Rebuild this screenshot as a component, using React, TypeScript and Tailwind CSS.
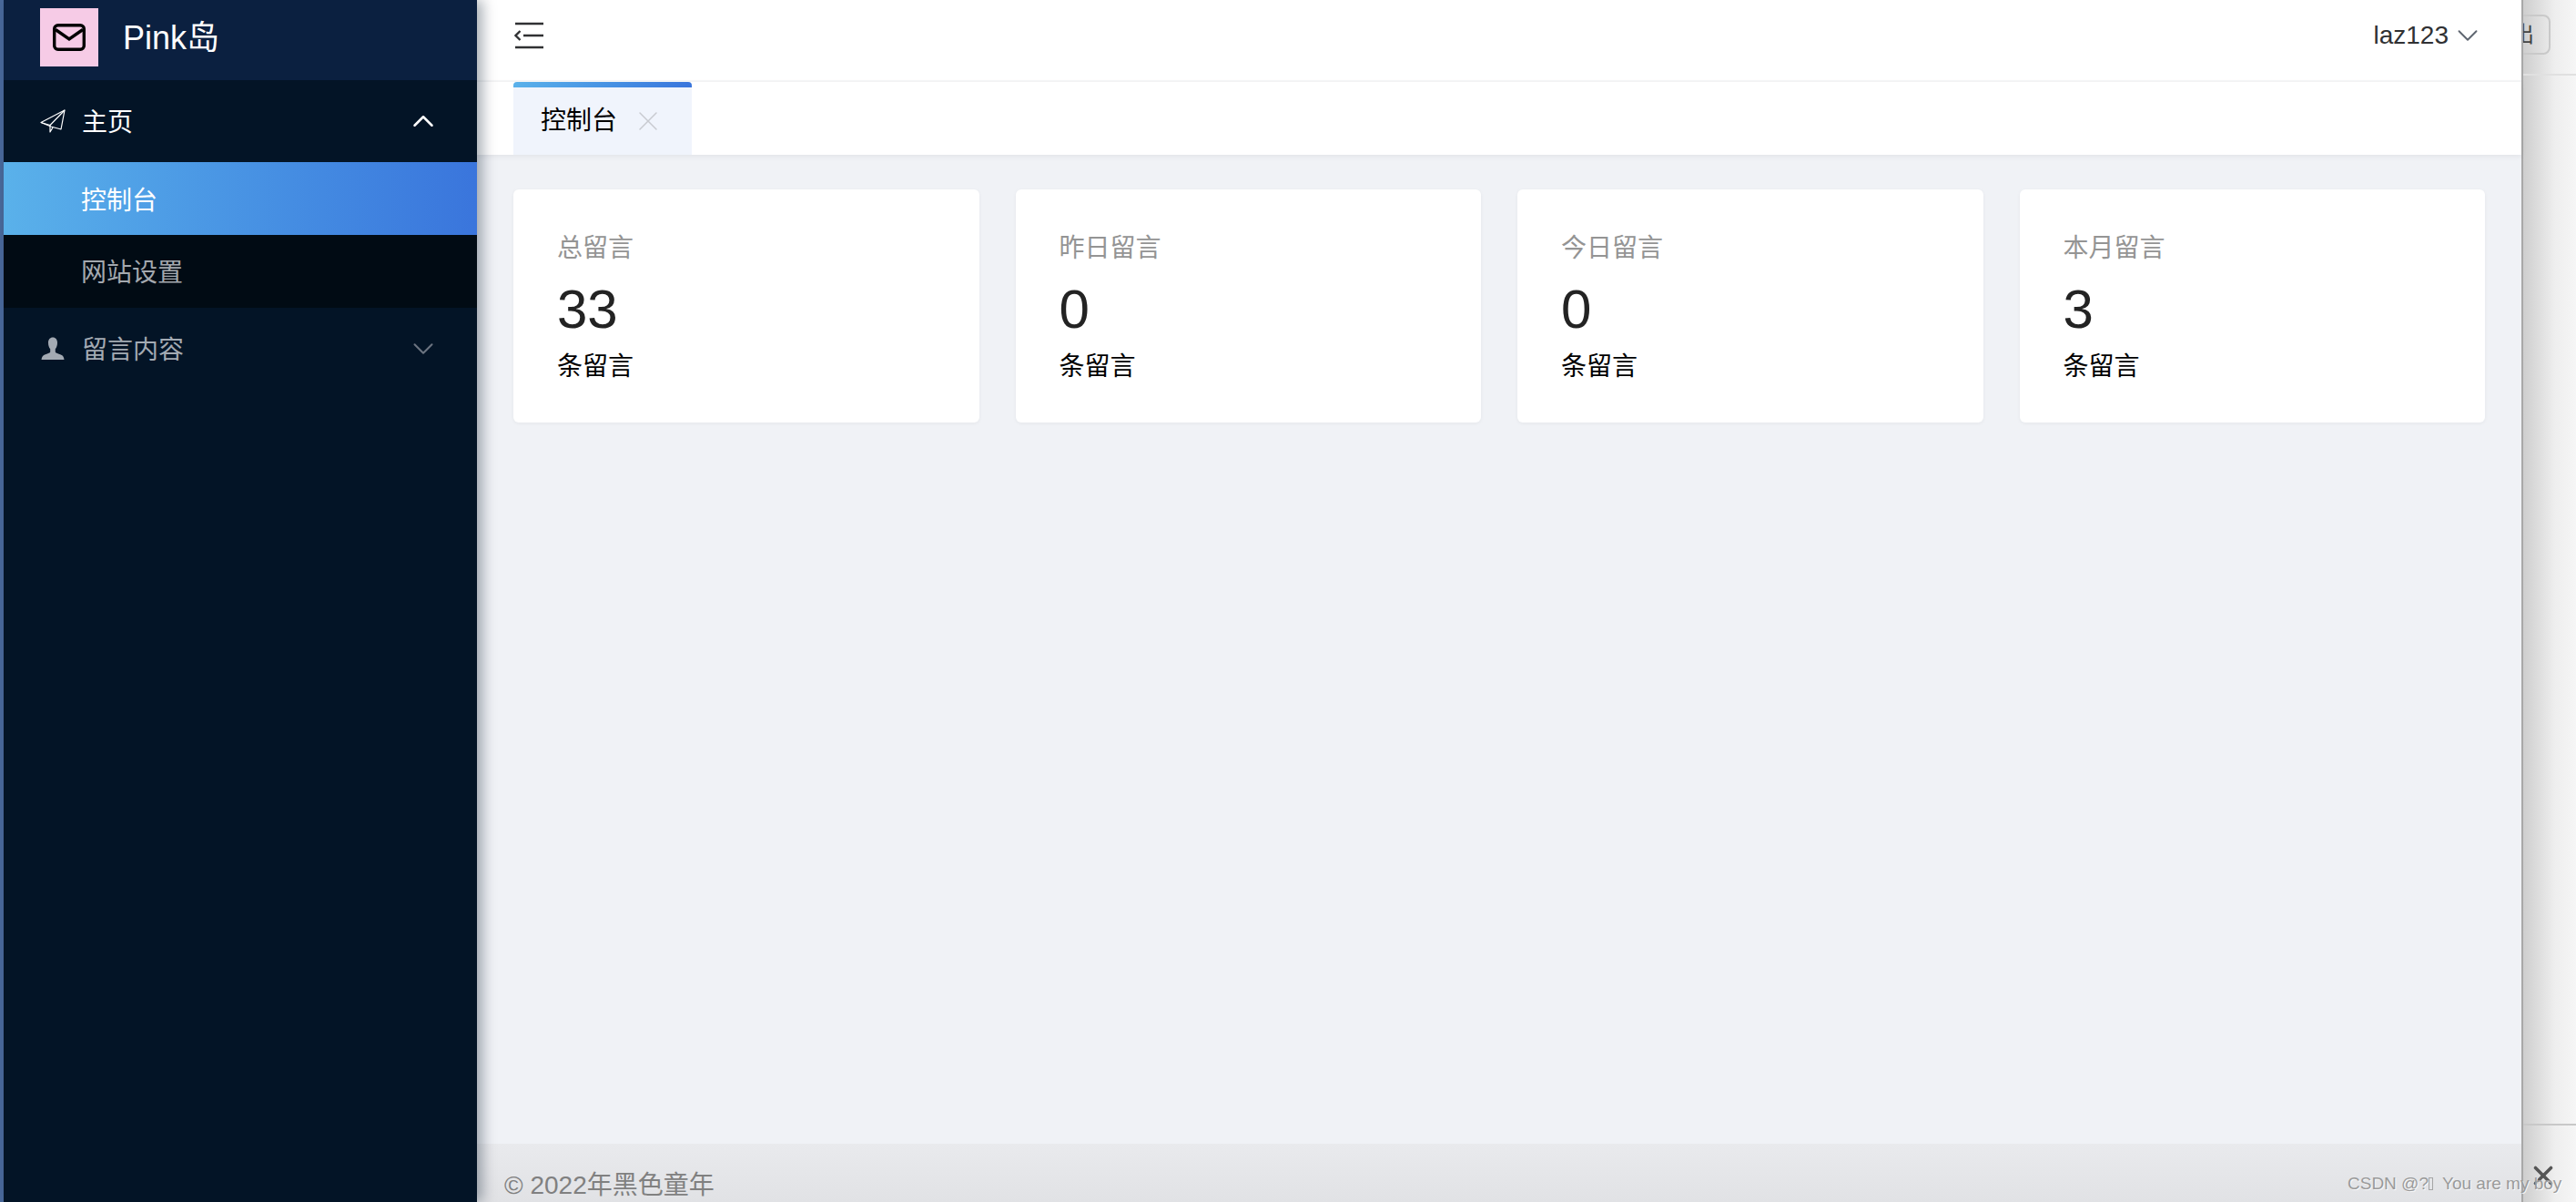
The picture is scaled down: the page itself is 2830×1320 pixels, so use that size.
import { ChevronDown, ChevronUp, X } from 'lucide-react';

const stats = [
  { label: '总留言', value: 33 },
  { label: '昨日留言', value: 0 },
  { label: '今日留言', value: 0 },
  { label: '本月留言', value: 3 },
];

function MailIcon() {
  return (
    <svg viewBox="0 0 36 30" className="w-[36px] h-[30px]" fill="none" stroke="#000" strokeWidth="3.400" aria-hidden="true">
      <rect x="1.700" y="1.700" width="32.600" height="26.600" rx="4" />
      <path d="M3 6.500 L18 17 L33 6.500" strokeLinejoin="miter" />
    </svg>
  );
}

function PlaneIcon() {
  return (
    <svg viewBox="0 0 28 26" className="w-[28px] h-[26px]" fill="none" stroke="#fff" strokeWidth="1.200" strokeLinejoin="round" aria-hidden="true">
      <path d="M1 14.500 L27 1 L23 22 L12 19 Z" />
      <path d="M1 14.500 L11 17.500 L27 1" />
      <path d="M11 17.500 L11 25 L14 20" />
    </svg>
  );
}

function UserIcon() {
  return (
    <svg viewBox="0 0 26 26" className="w-[26px] h-[26px]" fill="#a3aab3" aria-hidden="true">
      <path d="M13 0.500c3 0 5 2.300 5 5.800 0 3-0.800 5.500-2.200 6.900v3.300c0 1 2.400 1.700 5.400 2.800 2.700 1 3.800 2.200 4.300 5.700H0.500c0.500-3.500 1.600-4.700 4.300-5.700 3-1.100 5.400-1.800 5.400-2.800v-3.300C8.800 11.800 8 9.300 8 6.300 8 2.800 10 0.500 13 0.500z" />
    </svg>
  );
}

function FoldIcon() {
  return (
    <svg viewBox="0 0 32 30" className="w-[32px] h-[30px]" fill="none" stroke="#303133" strokeWidth="2.400" aria-hidden="true">
      <path d="M1 2h31M10 15h22M1 28h31" />
      <path d="M6.500 10 L1.500 15 L6.500 20" />
    </svg>
  );
}

export default function App() {
  return (
    <div className="relative w-[2830px] h-[1320px] flex overflow-hidden bg-white font-['Liberation_Sans','Noto_Sans_CJK_SC',sans-serif]">
      <div className="w-[4px] bg-[#4a6a9c] shrink-0" />

      <aside className="relative z-10 w-[520px] shrink-0 bg-[#031426] shadow-[6px_0_14px_rgba(0,21,41,0.35)]">
        <div className="h-[88px] bg-[#0b2040] flex items-center pl-[40px]">
          <div className="w-[64px] h-[64px] bg-[#f6cbe6] flex items-center justify-center mt-[-6px]">
            <MailIcon />
          </div>
          <span className="ml-[27px] text-[36px] leading-none text-white mt-[-4px]">Pink岛</span>
        </div>

        <div className="h-[90px] flex items-center pl-[40px] pr-[40px] text-white text-[28px] bg-[#031426]">
          <PlaneIcon />
          <span className="ml-[18px] flex-1 pt-[3px]">主页</span>
          <ChevronUp className="w-[38px] h-[38px]" strokeWidth={1.600} />
        </div>
        <div className="h-[80px] flex items-center pl-[85px] pt-[5px] text-white text-[28px] bg-gradient-to-r from-[#5ab1ea] to-[#3a75dc]">
          控制台
        </div>
        <div className="h-[80px] flex items-center pl-[85px] pt-[3px] text-[#a3a8ae] text-[28px] bg-[#010b14]">
          网站设置
        </div>
        <div className="h-[90px] flex items-center pl-[41px] pr-[40px] text-[#a3aab3] text-[28px]">
          <UserIcon />
          <span className="ml-[19px] flex-1 pt-[3px]">留言内容</span>
          <ChevronDown className="w-[38px] h-[38px] text-[#6b7480]" strokeWidth={1.300} />
        </div>
      </aside>

      <main className="flex-1 flex flex-col min-w-0 bg-[#f0f2f6]">
        <header className="h-[90px] shrink-0 bg-white border-b-2 border-[#f5f6f7] flex items-center justify-between pl-[41px] pr-[40px] pb-[10px]">
          <FoldIcon />
          <div className="flex items-center text-[#303133] text-[28px]">
            <span>laz123</span>
            <ChevronDown className="ml-[2px] w-[38px] h-[38px] text-[#5e6570]" strokeWidth={1.200} />
          </div>
        </header>

        <div className="h-[80px] shrink-0 bg-white pl-[40px] shadow-[0_2px_6px_rgba(0,0,0,0.06)] relative">
          <div className="w-[196px] h-[80px] bg-[#f0f4fc] rounded-t-[4px] overflow-hidden">
            <div className="h-[6px] bg-gradient-to-r from-[#5ab1ea] to-[#3a75dc]" />
            <div className="h-[74px] flex items-center pl-[30px] text-[28px] text-black">
              <span>控制台</span>
              <X className="ml-[16px] w-[36px] h-[36px] text-[#c8cad0]" strokeWidth={1} />
            </div>
          </div>
        </div>

        <div className="flex-1 pt-[38px] px-[40px]">
          <div className="grid grid-cols-4 gap-[40px]">
            {stats.map((s) => (
              <div key={s.label} className="bg-white rounded-[6px] shadow-[0_1px_4px_rgba(0,0,0,0.05)] px-[48px] pt-[49px] h-[256px]">
                <div className="text-[28px] leading-[32px] text-[#949494]">{s.label}</div>
                <div className="mt-[19px] text-[60px] leading-[64px] text-[#232323]">{s.value}</div>
                <div className="mt-[15px] text-[28px] leading-[32px] text-black">条留言</div>
              </div>
            ))}
          </div>
        </div>

        <footer className="h-[64px] shrink-0 bg-gradient-to-b from-[#e9eaed] to-[#e1e2e5] pl-[30px] pt-[28px] text-[28px] leading-[36px] text-[#808080]">
          © 2022年黑色童年
        </footer>
      </main>

      <div className="w-[60px] shrink-0 flex flex-col overflow-hidden border-l-2 border-[#a8a8a8] bg-gradient-to-r from-[#cecece] via-[#eeeeee] via-60% to-[#f6f6f6]">
        <div className="h-[83px] shrink-0 border-b-2 border-[#e0e0e0] pt-[16px]">
          <div className="ml-[-30px] w-[60px] h-[44px] rounded-[8px] border-2 border-[#c9c9c9] flex items-center justify-end pr-[16px] text-[24px] text-[#444]">
            出
          </div>
        </div>
        <div className="h-[1153px] shrink-0 border-b-2 border-[#c8c8c8]" />
        <div className="flex-1 flex justify-end pr-[19px] pt-[38px]">
          <X className="w-[34px] h-[34px] text-[#555]" strokeWidth={2.500} />
        </div>
      </div>

      <div className="absolute z-20 left-[2579px] top-[1288px] text-[19px] leading-[24px] text-[#9a9a9a] whitespace-pre flex items-center [text-shadow:1px_1px_0_rgba(255,255,255,0.8)]">
        <span>CSDN @?</span>
        <span className="inline-block w-[5px] h-[14px] border border-[#a5a5a5] mr-[10px]" />
        <span>You are my boy</span>
      </div>
    </div>
  );
}
